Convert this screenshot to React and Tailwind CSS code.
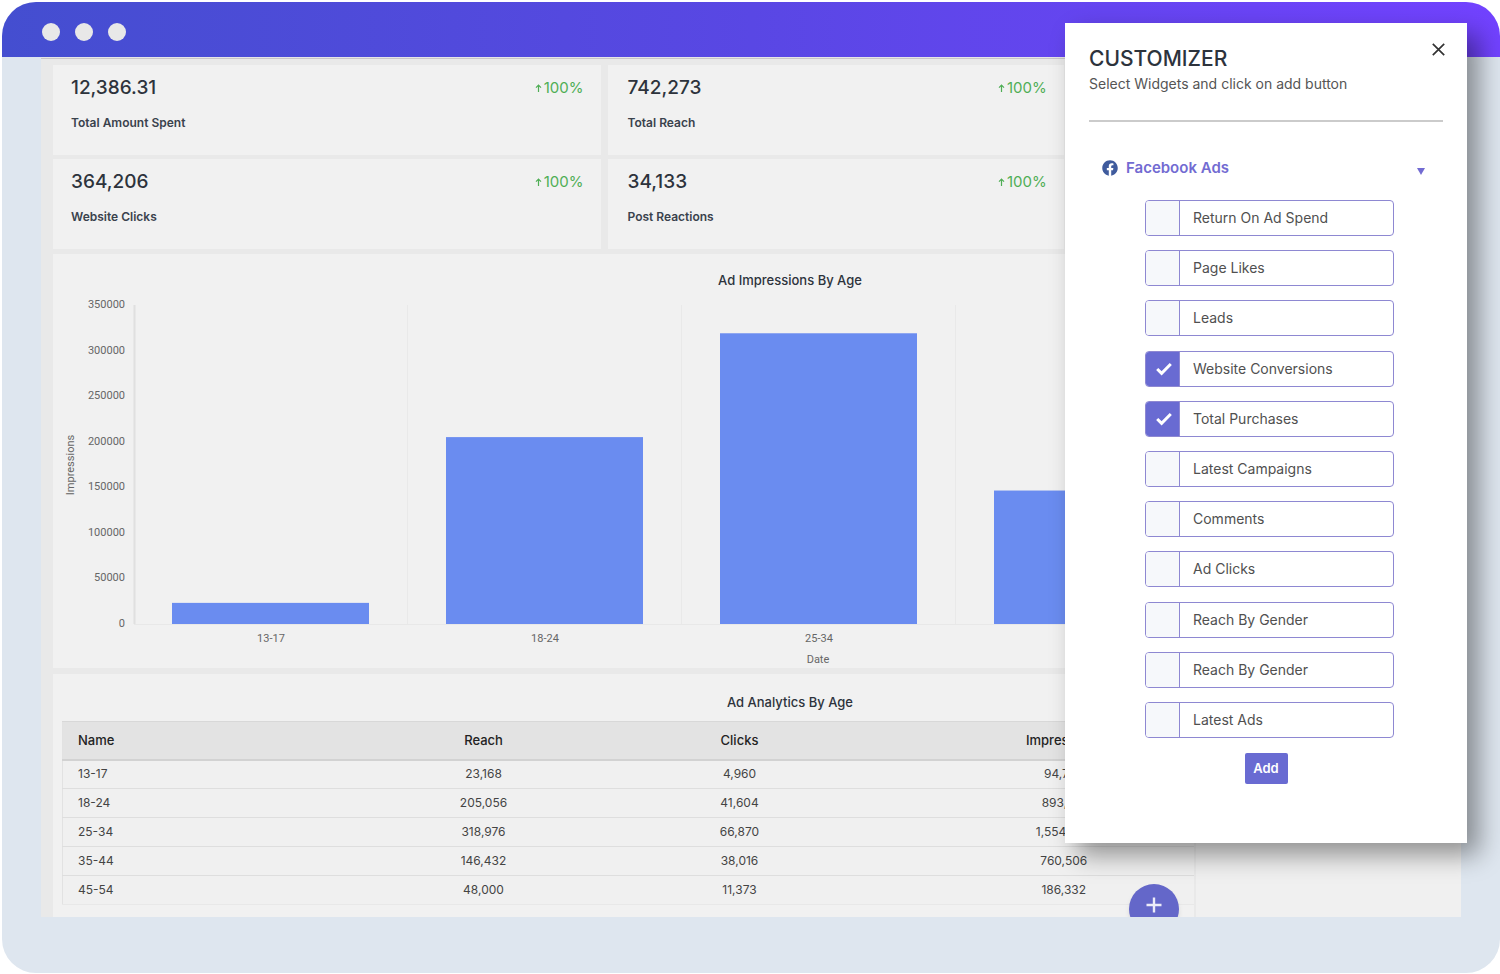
import { useState } from "react";
import { FaFacebook } from "react-icons/fa";

const STATS = [
  { value: "12,386.31", label: "Total Amount Spent" },
  { value: "742,273", label: "Total Reach" },
  { value: "364,206", label: "Website Clicks" },
  { value: "34,133", label: "Post Reactions" },
];

const AGES = [
  { name: "13-17", reach: 23168, clicks: "4,960", impressions: "94,722" },
  { name: "18-24", reach: 205056, clicks: "41,604", impressions: "893,150" },
  { name: "25-34", reach: 318976, clicks: "66,870", impressions: "1,554,208" },
  { name: "35-44", reach: 146432, clicks: "38,016", impressions: "760,506" },
  { name: "45-54", reach: 48000, clicks: "11,373", impressions: "186,332" },
];

const WIDGETS = [
  "Return On Ad Spend",
  "Page Likes",
  "Leads",
  "Website Conversions",
  "Total Purchases",
  "Latest Campaigns",
  "Comments",
  "Ad Clicks",
  "Reach By Gender",
  "Reach By Gender",
  "Latest Ads",
];

const TICKS = [350000, 300000, 250000, 200000, 150000, 100000, 50000, 0];

function StatCard({ value, label, className }) {
  return (
    <div className={`h-[90px] bg-[#f1f1f1] pr-[17px] pt-[9px] ${className}`}>
      <div className="flex items-center justify-between">
        <p className="text-[19px] leading-7 font-medium text-[#2d333c]">{value}</p>
        <p className="flex items-center gap-0.5 text-[15px] leading-7 text-[#4fae55]">
          <svg width="7" height="10" viewBox="0 0 7 10" fill="none" stroke="currentColor" strokeWidth="1.2" aria-hidden="true">
            <path d="M3.5 9V2.2M1 4.6L3.5 2L6 4.6" />
          </svg>
          100%
        </p>
      </div>
      <p className="mt-[13px] text-[12px] leading-4 font-semibold text-[#3a424d]">{label}</p>
    </div>
  );
}

function BarChart() {
  const left = 81;
  const step = 274;
  const top = 11;
  const height = 319;
  const bottom = top + height;
  return (
    <svg width="1474" height="374" className="block font-[Roboto,sans-serif]" fontSize="11" fill="#666" role="img" aria-label="Ad impressions by age">
      {TICKS.map((t) => (
        <text key={t} x="72" y={bottom + 3 - (t / 350000) * height} textAnchor="end">
          {t}
        </text>
      ))}
      <text x="21" y="171" textAnchor="middle" transform="rotate(-90 21 171)">
        Impressions
      </text>
      <path d={`M${left + 0.5} ${top}V${bottom}`} stroke="#e0e0e0" strokeWidth="2" />
      <path d={`M${left} ${bottom + 0.5}H1460`} stroke="#e8e8e8" />
      {AGES.slice(0, 4).map((a, i) => {
        const h = (a.reach / 350000) * height;
        return (
          <g key={a.name}>
            <path d={`M${left + (i + 1) * step - 0.5} ${top}V${bottom}`} stroke="#e9e9e9" />
            <rect x={left + i * step + 38} y={bottom - h} width="197" height={h} fill="#6a8cf0" />
            <text x={left + i * step + step / 2} y="348" textAnchor="middle">
              {a.name}
            </text>
          </g>
        );
      })}
      <text x="765" y="369" textAnchor="middle">
        Date
      </text>
    </svg>
  );
}

function AgeTable() {
  return (
    <table className="ml-[9px] w-[1199px] table-fixed border-collapse border border-[#e2e2e2] text-center text-[12px] text-[#444]">
      <colgroup>
        <col className="w-[293px]" />
        <col className="w-[256px]" />
        <col className="w-[256px]" />
        <col />
      </colgroup>
      <thead>
        <tr className="h-[38px] border-t border-b-2 border-t-[#d8d8d8] border-b-[#d2d2d2] bg-[#e3e3e3] text-[13px] text-[#222]">
          <th scope="col" className="pl-[15px] text-left font-medium">Name</th>
          <th scope="col" className="font-medium">Reach</th>
          <th scope="col" className="font-medium">Clicks</th>
          <th scope="col" className="font-medium">Impressions</th>
        </tr>
      </thead>
      <tbody>
        {AGES.map((a) => (
          <tr key={a.name} className="h-[29px] border-b border-[#dedede] bg-[#f0f0f0] last:border-[#e8e8e8]">
            <td className="pl-[15px] text-left">{a.name}</td>
            <td>{a.reach.toLocaleString("en-US")}</td>
            <td>{a.clicks}</td>
            <td>{a.impressions}</td>
          </tr>
        ))}
      </tbody>
    </table>
  );
}

function Dashboard() {
  return (
    <main className="relative mx-[39px] mb-14 flex flex-1 overflow-hidden border-t border-[#e6e6e6] bg-[#f0f0f0]">
      <div className="w-[1155px] shrink-0 overflow-hidden border-t border-r-2 border-t-[#c9c5c9] border-r-[#e9e9e9] bg-[#e9e9e9] pt-1.5 pl-3">
        <div className="w-[1474px]">
          <section aria-label="Totals" className="grid grid-cols-[6fr_5fr_5fr] gap-x-[7px] gap-y-1">
            {STATS.map((s, i) => (
              <StatCard key={s.label} {...s} className={i % 2 ? "col-start-2 pl-5" : "col-start-1 pl-[18px]"} />
            ))}
          </section>
          <section className="mt-[5px] bg-[#f1f1f1] pt-3.5">
            <h2 className="mb-0.5 text-center text-[13px] leading-6 font-medium text-[#2d333c]">Ad Impressions By Age</h2>
            <BarChart />
          </section>
          <section className="mt-1.5 bg-[#f1f1f1] pt-4 pb-3">
            <h2 className="mb-[7px] text-center text-[13px] leading-6 font-medium text-[#2d333c]">Ad Analytics By Age</h2>
            <AgeTable />
          </section>
        </div>
      </div>
      <button type="button" aria-label="Add widget" className="absolute -bottom-[17px] left-[1088px] flex size-[50px] items-start justify-center rounded-full bg-[#6467c9] pt-[13px] text-[#ececf8] shadow-md">
        <svg width="16" height="16" viewBox="0 0 16 16" stroke="currentColor" strokeWidth="2.4" aria-hidden="true">
          <path d="M8 0.5V15.5M0.5 8H15.5" />
        </svg>
      </button>
    </main>
  );
}

function WidgetOption({ id, label, checked, onChange }) {
  return (
    <label htmlFor={id} className="flex h-9 w-[249px] overflow-hidden rounded border border-[#8e88d2] bg-white">
      <span className="grid w-[33px] shrink-0">
        <input
          id={id}
          type="checkbox"
          checked={checked}
          onChange={onChange}
          className="peer col-start-1 row-start-1 appearance-none bg-[#f6f8fb] checked:bg-[#696bd2]"
        />
        <svg viewBox="0 0 16 14" className="pointer-events-none invisible col-start-1 row-start-1 ml-0.5 h-[14px] w-4 place-self-center peer-checked:visible" fill="none" stroke="white" strokeWidth="3" aria-hidden="true">
          <path d="M1.2 7L5.6 11.4L14.8 2" />
        </svg>
      </span>
      <span className="flex flex-1 items-center border-l border-[#8e88d2] pl-[13px] text-[14px] leading-4 text-[#505050]">{label}</span>
    </label>
  );
}

function Customizer() {
  const [selected, setSelected] = useState([3, 4]);
  const toggle = (i) =>
    setSelected((s) => (s.includes(i) ? s.filter((n) => n !== i) : [...s, i]));

  return (
    <aside className="absolute top-[21px] right-[33px] w-[402px] bg-white px-6 pt-[18px] pb-[59px] shadow-[12px_12px_24px_rgba(0,0,0,0.4)]">
      <header className="flex items-start justify-between border-b-2 border-[#cbcbcb] pb-[26px]">
        <div className="pt-[3px]">
          <h1 className="text-[21px] leading-[30px] font-medium text-[#2d333c]">CUSTOMIZER</h1>
          <p className="text-[14px] leading-5 text-[#555]">Select Widgets and click on add button</p>
        </div>
        <button type="button" aria-label="Close" className="-mr-1 p-0.5 text-[#333]">
          <svg width="13" height="13" viewBox="0 0 13 13" stroke="currentColor" strokeWidth="1.7" aria-hidden="true">
            <path d="M0.8 0.8L12.2 12.2M12.2 0.8L0.8 12.2" />
          </svg>
        </button>
      </header>
      <button type="button" aria-expanded="true" className="mt-9 flex w-full items-center pr-[18px] pl-[13px] text-[#726bd2]">
        <FaFacebook className="size-4 text-[#3f5b9d]" aria-hidden="true" />
        <span className="ml-2 text-[15px] leading-5 font-semibold">Facebook Ads</span>
        <svg className="mt-1.5 ml-auto" width="8" height="7" viewBox="0 0 8 7" fill="currentColor" aria-hidden="true">
          <path d="M0 0H8L4 7Z" />
        </svg>
      </button>
      <div className="mt-[22px] ml-14 flex h-[538px] flex-col justify-between">
        {WIDGETS.map((w, i) => (
          <WidgetOption key={i} id={`widget-${i}`} label={w} checked={selected.includes(i)} onChange={() => toggle(i)} />
        ))}
      </div>
      <button type="button" className="mx-auto mt-[15px] block h-[31px] w-[43px] rounded-xs bg-[#696bd2] text-[13px] font-semibold text-white">
        Add
      </button>
    </aside>
  );
}

export default function App() {
  return (
    <div className="bg-white pt-0.5 pb-px pl-0.5 font-[Inter,sans-serif]">
      <div className="relative flex min-h-[calc(100vh-3px)] flex-col overflow-hidden rounded-[34px] bg-[#dee6ef]">
        <div className="flex h-[55px] items-center gap-[15px] bg-linear-to-r from-[#444ed0] via-[#5947e4] to-[#7242ff] pt-1 pl-10">
          <span className="size-[18px] rounded-full bg-[#e8e8e8]" />
          <span className="size-[18px] rounded-full bg-[#e8e8e8]" />
          <span className="size-[18px] rounded-full bg-[#e8e8e8]" />
        </div>
        <Dashboard />
        <Customizer />
      </div>
    </div>
  );
}
